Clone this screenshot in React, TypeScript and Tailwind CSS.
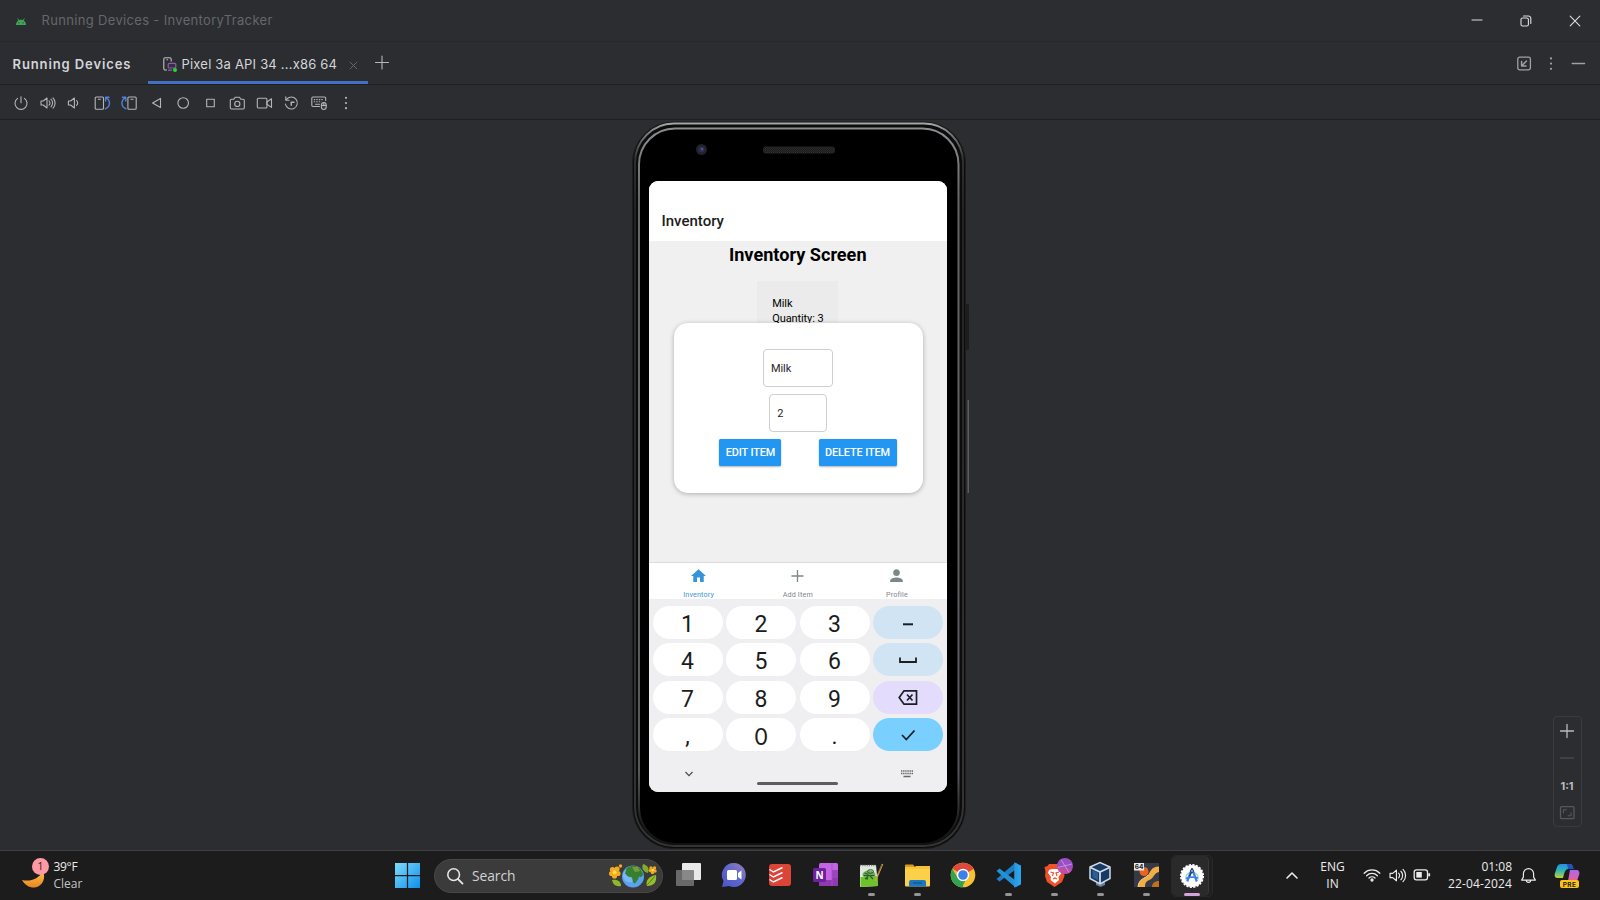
import React from "react";

const line = {
  fill: "none",
  stroke: "currentColor",
  strokeWidth: 1.1,
  strokeLinecap: "round" as const,
  strokeLinejoin: "round" as const,
};

function Icon({ children, size = 16, className = "" }: { children: React.ReactNode; size?: number; className?: string }) {
  return (
    <svg width={size} height={size} viewBox="0 0 16 16" className={"shrink-0 overflow-visible " + className} {...line}>
      {children}
    </svg>
  );
}

function TitleBar() {
  return (
    <header className="flex h-[42px] shrink-0 items-center border-b border-[#25272a]">
      <svg width="10" height="7" viewBox="0 0 10 7" className="ml-4 mt-px">
        <path d="M0 7 C0 4.8 1 3.3 2.3 2.4 L1.2 0.6 L1.8 0.2 L3 2 C4.3 1.5 5.7 1.5 7 2 L8.2 0.2 L8.8 0.6 L7.7 2.4 C9 3.3 10 4.8 10 7 Z" fill="#3aa757" />
        <circle cx="2.9" cy="4.8" r=".6" fill="#2b2d30" />
        <circle cx="7.1" cy="4.8" r=".6" fill="#2b2d30" />
      </svg>
      <span className="ml-[15.5px] whitespace-nowrap font-['Inter'] text-[13px] tracking-[0.33px] text-[#65676b]">
        Running Devices - InventoryTracker
      </span>
      <div className="ml-auto mr-px flex items-center text-[#dedede]">
        <span className="flex w-[48.5px] justify-center">
          <Icon><path d="M3 7h10" /></Icon>
        </span>
        <span className="flex w-[49px] justify-center">
          <Icon>
            <rect x="3" y="5" width="7.4" height="8" rx="1.5" />
            <path d="M5.5 3h4.8a2.5 2.5 0 0 1 2.5 2.5V10.5" />
          </Icon>
        </span>
        <span className="flex w-[49px] justify-center">
          <Icon><path d="M3.2 3.2l9.6 9.6M12.8 3.2l-9.6 9.6" /></Icon>
        </span>
      </div>
    </header>
  );
}

function TabBar() {
  return (
    <nav className="flex h-[43px] shrink-0 items-stretch border-b border-[#1e1f22] font-['Inter'] text-[13px] text-[#d3d5d9]">
      <span className="flex w-[148px] items-center whitespace-nowrap pl-[12.5px] pt-[3px] font-semibold tracking-[0.9px]">Running Devices</span>
      <div className="flex w-[220px] items-center border-b-[3px] border-[#4270c7] pl-[15px] pt-[6px]">
        <svg width="14" height="15" viewBox="0 0 14 15" fill="none" className="shrink-0">
          <path d="M4 13H2.2A1.4 1.4 0 0 1 .8 11.6V2.2A1.4 1.4 0 0 1 2.2.8H6.8A1.4 1.4 0 0 1 8.2 2.2V4.5M3.5 2.8h1.6" stroke="#bfc1c5" strokeWidth="1.1" />
          <rect x="5.2" y="6.4" width="7.6" height="4.6" rx="1" stroke="#8b5fa8" strokeWidth="1.2" fill="#3a2c45" />
          <path d="M5 13.2h4" stroke="#8b5fa8" strokeWidth="1.3" />
          <circle cx="12" cy="13" r="2" fill="#22dd2c" />
        </svg>
        <span className="ml-[4.5px] whitespace-nowrap tracking-[0.2px]">Pixel 3a API 34 ...x86 64</span>
        <Icon size={11} className="ml-[11px] mt-px text-[#76787c]"><path d="M3 3l10 10M13 3L3 13" /></Icon>
      </div>
      <div className="flex w-[28px] items-center justify-center text-[#b4b6b9]">
        <Icon><path d="M8 1v13M1.5 7.5h13" /></Icon>
      </div>
      <div className="ml-auto flex items-center text-[#9fa1a5]">
        <Icon className="mr-[12px]">
          <rect x="1.8" y="2.2" width="12.6" height="12.6" rx="1.8" strokeWidth="1.3" />
          <path d="M10.5 6L5.8 10.7M5.6 6.6v4.4h4.4" strokeWidth="1.5" />
        </Icon>
        <Icon className="mr-[11px]">
          <g fill="currentColor" stroke="none"><circle cx="7" cy="3.4" r="1.1" /><circle cx="7" cy="8.6" r="1.1" /><circle cx="7" cy="13.8" r="1.1" /></g>
        </Icon>
        <Icon className="mr-[13px]"><path d="M1.2 8.5h12.4" strokeWidth="1.3" /></Icon>
      </div>
    </nav>
  );
}

const tools: React.ReactNode[] = [
  <><path d="M8 1.8v6" /><path d="M4.6 3.4a6 6 0 1 0 6.8 0" /></>,
  <><path d="M1 6h2.2L7 3v10L3.2 10H1z" /><path d="M9 5.8a3 3 0 0 1 0 4.4M11 4.2a5.4 5.4 0 0 1 0 7.6M13 2.8a7.5 7.5 0 0 1 0 10.4" /></>,
  <><path d="M1.4 6h2.2L7.4 3v10L3.6 10H1.4z" /><path d="M9.6 5.6a3.2 3.2 0 0 1 0 4.8" /></>,
  <><rect x="1.2" y="2" width="8.3" height="12.2" rx="1" /><path d="M4.3 4.2h2.1" /><path d="M11.3 13.8C17 11.5 16.5 5 12 2.8M11.6 6V2.3H15" stroke="#4f82d8" strokeWidth="1.4" /></>,
  <><rect x="6.9" y="2" width="8.3" height="12.2" rx="1" /><path d="M10 4.2h2.1" /><path d="M5 13.8C-.6 11.5-.1 5 4.4 2.8M4.8 6V2.3H1.4" stroke="#4f82d8" strokeWidth="1.4" /></>,
  <path d="M12.5 3.4v9.2L4.6 8z" />,
  <circle cx="8.2" cy="8" r="5.3" />,
  <rect x="4.7" y="4.2" width="7.6" height="7.6" />,
  <><path d="M1.3 5.500a1.200 1.200 0 0 1 1.200-1.200h2.300l1.300-2h4.400l1.300 2h2.300a1.200 1.200 0 0 1 1.200 1.200v7.300a1.200 1.200 0 0 1-1.200 1.200H2.500a1.200 1.200 0 0 1-1.200-1.200z" /><circle cx="8.300" cy="8.900" r="2.600" /></>,
  <><rect x="1.300" y="3.200" width="9.600" height="9.800" rx="1" /><path d="M10.900 7l4.600-3.200v8.600L10.900 9.200z" /></>,
  <><path d="M3.400 4.500a6 6 0 1 1-1 4.500M2.800 1.800V5.200H6.200" /><path d="M8.200 10.300V7.300h2.800" strokeWidth="1.400" /></>,
  <><path d="M8.500 11.500H2A1.200 1.200 0 0 1 .8 10.300V3.200A1.200 1.200 0 0 1 2 2h11.500a1.200 1.200 0 0 1 1.200 1.200V5.500" /><path d="M3.200 4.600h.6M5.700 4.600h.6M8.200 4.600h.6M10.700 4.600h.6M3.200 6.800h.6M5.700 6.800h.6M8.200 6.800h.6M4.500 9.200h4" /><rect x="10.400" y="7.500" width="4.800" height="7" rx="2.400" fill="#3a3c40" /><path d="M12.800 7.500v3M10.400 10.500h4.800" /></>,
  <g fill="currentColor" stroke="none"><circle cx="8" cy="2.800" r="1.100" /><circle cx="8" cy="8" r="1.100" /><circle cx="8" cy="13.200" r="1.100" /></g>,
];

function ToolBar() {
  return (
    <div className="flex h-[35px] shrink-0 items-center border-b border-[#1e1f22] pl-[7px] pt-px text-[#b3b5b9]">
      {tools.map((t, i) => (
        <span key={i} className="flex w-[27.1px] shrink-0 justify-center">
          <Icon>{t}</Icon>
        </span>
      ))}
    </div>
  );
}

function DeviceSkin() {
  return (
    <svg width="342" height="730" viewBox="0 0 342 730" fill="none" className="absolute left-0 top-0">
      <defs>
        <linearGradient id="rim" x1="0" y1="0" x2="0" y2="1">
          <stop offset="0" stopColor="#a4a5a6" />
          <stop offset=".015" stopColor="#77787a" />
          <stop offset=".05" stopColor="#2f2f30" />
          <stop offset=".12" stopColor="#232324" />
          <stop offset="1" stopColor="#343435" />
        </linearGradient>
        <linearGradient id="gloss" x1="0" y1="0" x2="0" y2="1">
          <stop offset="0" stopColor="#8c8f92" />
          <stop offset=".1" stopColor="#65676a" />
          <stop offset=".9" stopColor="#56585b" />
          <stop offset=".97" stopColor="#1d1d1e" />
          <stop offset="1" stopColor="#111" />
        </linearGradient>
        <pattern id="mesh" width="2" height="2" patternUnits="userSpaceOnUse">
          <rect width="2" height="2" fill="#1b1b1b" />
          <rect width="1" height="1" fill="#303030" />
          <rect x="1" y="1" width="1" height="1" fill="#292929" />
        </pattern>
      </defs>
      <rect x="337" y="184" width="3" height="46" rx="1" fill="#1d1d1e" />
      <rect x="338.500" y="280" width="1.500" height="93" fill="#5c5d5e" />
      <rect x="3.500" y="2" width="333" height="726.500" rx="41" fill="#0c0c0d" stroke="#1d1d1e" />
      <rect x="6" y="3.500" width="328" height="722.500" rx="39" stroke="url(#rim)" strokeWidth="2" />
      <rect x="10" y="8.500" width="319.500" height="715.500" rx="36" fill="#000" stroke="url(#gloss)" strokeWidth="2" />
      <circle cx="72.500" cy="29.500" r="5.500" fill="#20222c" />
      <circle cx="72.500" cy="29.500" r="3" fill="#2c3050" />
      <circle cx="73" cy="29" r="1.200" fill="#4c5288" />
      <rect x="134" y="26.500" width="72" height="7" rx="3" fill="url(#mesh)" />
    </svg>
  );
}

function TabItem({ label, color, children }: { label: string; color: string; children: React.ReactNode }) {
  return (
    <div className={"flex flex-1 flex-col items-center " + color}>
      <svg width="19" height="18" viewBox="0 0 24 24" fill="currentColor" className="mt-[3.5px] shrink-0">{children}</svg>
      <span className="mt-[5.5px] text-[7.2px] leading-[10px] tracking-[0.15px]">{label}</span>
    </div>
  );
}

const keyBase = "flex h-[33px] w-[70px] items-center justify-center rounded-[16.5px] ";

function Keyboard() {
  const rows = [
    ["1", "2", "3"],
    ["4", "5", "6"],
    ["7", "8", "9"],
    [",", "0", "."],
  ];
  const tone = ["bg-[#d1e4f4]", "bg-[#d1e4f4]", "bg-[#e4dcfd]", "bg-[#79d0ff]"];
  const glyphs = [
    <path d="M7 14.300h10" strokeWidth="2" />,
    <path d="M4 9.500v4.500h16V9.500" strokeWidth="1.800" />,
    <><path d="M8 5.800h12.500v13.400H8L3.200 12.500z" strokeWidth="1.700" /><path d="M11 9.500l5.500 6M16.500 9.500L11 15.500" strokeWidth="1.700" /></>,
    <path d="M6 12l4.300 4.500L18.500 7.500" strokeWidth="1.800" />,
  ];
  return (
    <div className="flex h-[193px] flex-col bg-[#efeff1] px-[3.5px] pt-[6.5px]">
      <div className="flex flex-col gap-[4.6px]">
        {rows.map((r, i) => (
          <div key={i} className="flex justify-between">
            {r.map((k) => (
              <div key={k} className={keyBase + "bg-white pt-[4px] leading-none text-[#1b1c1e] " + (k === "0" ? "font-['Inter'] text-[22.5px]" : "font-['Roboto'] text-[23px]")}>
                {k}
              </div>
            ))}
            <div className={keyBase + tone[i]}>
              <svg width="24" height="24" viewBox="0 0 24 24" fill="none" stroke="#1c1f24">{glyphs[i]}</svg>
            </div>
          </div>
        ))}
      </div>
      <div className="flex items-start justify-between pt-[14px]">
        <span className="flex w-[73px] justify-center pt-[4px]">
          <svg width="10" height="10" viewBox="0 0 10 10" fill="none" stroke="#4a4b4e" strokeWidth="1.2"><path d="M1.500 3L5 6.600 8.500 3" /></svg>
        </span>
        <span className="mt-[16.5px] h-[3px] w-[81px] rounded-full bg-[#5d5d60]" />
        <span className="flex w-[73px] justify-center pt-[5px]">
          <svg width="12" height="8" viewBox="0 0 12 8" stroke="#66676a" fill="none">
            <path d="M0 1h12M0 3.500h12" strokeWidth="1.400" strokeDasharray="1.400 .72" />
            <path d="M2.500 6.500h7" strokeWidth="1.300" />
          </svg>
        </span>
      </div>
    </div>
  );
}

function Screen() {
  return (
    <div className="relative flex h-[611px] w-[297.5px] flex-col overflow-hidden rounded-[9px] bg-[#f0f0f0] font-['Roboto'] text-black">
      <div className="flex h-[61px] shrink-0 items-end border-b border-[#f0f0f0] bg-white pb-[11px] pl-[12.5px]">
        <span className="text-[15px] font-medium leading-[17px] text-[#1c1c1e]">Inventory</span>
      </div>
      <div className="flex flex-1 flex-col items-center">
        <h1 className="mt-[2px] whitespace-nowrap text-[18.1px] font-bold leading-[22px]">Inventory Screen</h1>
        <div className="mt-[15px] h-[60px] w-[81px] bg-[#ebebeb] pl-[15px] pt-[16px] text-[11px] leading-[14.7px] tracking-[-0.1px]">
          <p>Milk</p>
          <p className="whitespace-nowrap">Quantity: 3</p>
        </div>
      </div>
      <div className="flex h-[37px] shrink-0 overflow-hidden border-t border-[#dcdcdc] bg-white">
        <TabItem label="Inventory" color="text-[#3694d8]"><path d="M10 20v-6h4v6h5v-8h3L12 3 2 12h3v8z" /></TabItem>
        <TabItem label="Add Item" color="text-[#7c878a]"><path d="M20 12.900h-7.100V20h-1.800v-7.100H4v-1.800h7.100V4h1.800v7.100H20z" /></TabItem>
        <TabItem label="Profile" color="text-[#7c878a]"><path d="M12 12c2.500 0 4.500-2 4.500-4.500S14.500 3 12 3 7.500 5 7.500 7.500 9.500 12 12 12zm0 2c-3 0-8.500 1.500-8.500 4.500V20h17v-1.500c0-3-5.500-4.500-8.500-4.500z" /></TabItem>
      </div>
      <Keyboard />
      <div className="absolute left-[24.5px] top-[141.5px] flex h-[170px] w-[249px] flex-col items-center rounded-[14px] bg-white pt-[26px] text-[11px] text-[#242424] shadow-[0_1px_5px_rgba(0,0,0,0.28)]">
        <div className="flex h-[38px] w-[70px] items-center rounded-[4px] border border-[#cfcfcf] pl-[7px] pt-[3px] tracking-[-0.1px]">Milk</div>
        <div className="mt-[7px] flex h-[38px] w-[57.5px] items-center rounded-[4px] border border-[#cfcfcf] pl-[7px] pt-[3px]">2</div>
        <div className="mt-[7.5px] flex w-full justify-between pl-[45.5px] pr-[26px] text-[10.9px] font-medium leading-[28px] tracking-[-0.1px] text-white">
          <span className="h-[27px] w-[62px] whitespace-nowrap rounded-[1.5px] bg-[#2196f3] pl-px text-center shadow-[0_1px_2px_rgba(0,0,0,0.3)]">EDIT ITEM</span>
          <span className="h-[27px] w-[78px] whitespace-nowrap rounded-[1.5px] bg-[#2196f3] text-center shadow-[0_1px_2px_rgba(0,0,0,0.3)]">DELETE ITEM</span>
        </div>
      </div>
    </div>
  );
}

function ZoomPanel() {
  return (
    <div className="absolute left-[1553px] top-[596px] flex h-[111px] w-[29px] flex-col items-center rounded-[4px] border border-[#393b3f] pr-px pt-[6px] text-[#b9bbbe]">
      <Icon><path d="M8 1.500v13M1.500 8h13" strokeWidth="1.300" /></Icon>
      <Icon className="mt-[10.5px] text-[#55575b]"><path d="M1.500 8h13" strokeWidth="1.200" /></Icon>
      <span className="mt-[12px] font-['Inter'] text-[11px] font-bold leading-4">1:1</span>
      <Icon className="mt-[11px] text-[#56585c]">
        <rect x="1.500" y="1.700" width="13.500" height="12" rx="1" strokeWidth="1.300" />
        <path d="M4.500 7.700V4.700h3M12 7.700v3H9" />
      </Icon>
    </div>
  );
}

function Globe() {
  return (
    <svg width="48" height="26" viewBox="0 0 48 26" className="shrink-0">
      <path d="M3 17c5-1 9 1 9 6-5 1-8-1-9-6z" fill="#8db82a" />
      <path d="M34 1c4 1 7 4 5 9-4-1-7-4-5-9z" fill="#7fae2c" />
      <path d="M47 12c1 7-2 11-9 11-2-5 2-10 9-11z" fill="#94bf2d" />
      <path d="M46 13c-2 3-5 6-8 9" stroke="#5d8a1c" strokeWidth=".7" />
      <circle cx="24" cy="13.500" r="11" fill="#5aa1ee" />
      <circle cx="21" cy="12.500" r="7" fill="#79b8f8" />
      <path d="M17.500 5.500c3-3.500 10-4 13.500 0l3 5c0 3-2 4-4 3l-1 3-3 4-2-1-1-5-4-1-3-3z" fill="#357f2f" />
      <path d="M23 4l6 0 2 4-5 1z" fill="#7a9c35" />
      <g fill="#f6ab1e">
        <circle cx="3.500" cy="6.500" r="2.600" /><circle cx="8" cy="6" r="2.600" /><circle cx="9" cy="10.500" r="2.600" /><circle cx="5.500" cy="13" r="2.600" /><circle cx="2.600" cy="10.500" r="2.600" />
        <circle cx="11.500" cy="3" r="1.700" />
        <circle cx="42" cy="5" r="1.700" /><circle cx="45.500" cy="5" r="1.700" /><circle cx="46" cy="8" r="1.700" /><circle cx="43.500" cy="9.500" r="1.700" /><circle cx="41.500" cy="7.500" r="1.700" />
      </g>
      <circle cx="5.700" cy="9.300" r="2" fill="#ffd95b" />
      <circle cx="43.800" cy="7" r="1.200" fill="#ffe07a" />
    </svg>
  );
}

const apps: { art: React.ReactNode; running?: boolean }[] = [
  { art: <><rect x="8" y="1" width="19" height="17" rx="1" fill="#e9e9e9" /><rect x="2" y="8" width="18" height="16" rx="1" fill="#777" fillOpacity=".85" /></> },
  {
    art: <>
      <defs><linearGradient id="chat" x1="0" y1="1" x2="1" y2="0"><stop offset="0" stopColor="#4d55c8" /><stop offset=".5" stopColor="#5f66cf" /><stop offset="1" stopColor="#9a7fb8" /></linearGradient></defs>
      <path d="M14 1a12 12 0 1 1-5 23L2 25l1.500-6A12 12 0 0 1 14 1z" fill="url(#chat)" />
      <rect x="7" y="8" width="10" height="10" rx="1.500" fill="#fff" /><path d="M18 11l3.500-2.500v9L18 15z" fill="#fff" />
    </>,
  },
  { art: <><rect x="3" y="2" width="22" height="22" rx="3" fill="#dc4437" /><path d="M3.500 7.500l4 2.500 9-4.500M3.500 12.500l4 2.500 9-4.500M3.500 17.500l4 2.500 9-4.500" fill="none" stroke="#fff" strokeWidth="1.400" /></> },
  { art: <><rect x="7" y="1" width="19" height="23" rx="1.500" fill="#c264e3" /><path d="M20 8h6v8h-6z" fill="#9c44c2" /><path d="M20 16h6v6.500a1.500 1.500 0 0 1-1.500 1.500H7v-6h13z" fill="#8f3ab0" /><path d="M20 1v23" stroke="#a74fcb" strokeWidth=".8" /><rect x="1" y="6" width="13" height="14" rx="1.500" fill="#6f209c" /><text x="7.500" y="16.700" textAnchor="middle" fontFamily="Open Sans" fontWeight="700" fontSize="10" fill="#fff">N</text></> },
  {
    running: true,
    art: <>
      <path d="M2 3h16l2 21-18 1z" fill="#dfe8df" />
      <path d="M2.500 15l17-1 .5 10-17.500 1z" fill="#6fc22a" />
      <path d="M2 3.500h16" stroke="#888" strokeWidth="1.600" strokeDasharray="1.200 1" />
      <ellipse cx="11" cy="12.500" rx="6.500" ry="4" fill="#6fb15a" />
      <ellipse cx="12.500" cy="9.500" rx="3" ry="1.800" fill="none" stroke="#2e4f2a" strokeWidth="1" />
      <path d="M5.500 13.500h11M6.500 11l4 1.500M7 17l3-2.500M12 14l3 3M10 13l-1 5" stroke="#2a5a25" strokeWidth="1.100" fill="none" />
      <path d="M24.500 2L19 15l-1.500 4" stroke="#caa44a" strokeWidth="1.700" fill="none" /><path d="M24 2.500L19.500 12" stroke="#554327" strokeWidth=".7" />
    </>,
  },
  { running: true, art: <><path d="M2 3.500a1 1 0 0 1 1-1h7l2.500 3H2z" fill="#d99a1d" /><rect x="2" y="5" width="25" height="19.500" rx="1" fill="#fcd049" /><path d="M2 5.500h9l2-1.500h14v3H2z" fill="#f5c337" /><path d="M6 24.500v-4.500a2 2 0 0 1 2-2h13a2 2 0 0 1 2 2v4.500z" fill="#1b77c4" /><path d="M10 21h9" stroke="#0d5692" strokeWidth="1.300" /></> },
  {
    art: <>
      <circle cx="14" cy="13" r="12.300" fill="#f7c22f" />
      <path d="M14 13L3.350 6.850A12.300 12.300 0 0 1 24.650 6.850z" fill="#dd4a3c" /><path d="M14 6.850h10.650L14 13z" fill="#dd4a3c" />
      <path d="M3.350 6.850L8.700 16.100 14 19.100 14 25.300A12.300 12.300 0 0 1 3.350 6.850z" fill="#32a350" />
      <path d="M14 25.300l5.300-9.200L14 13l-3 5 3.500 1z" fill="#f7c22f" /><path d="M8.700 16l5.300 3.100 2.500-.5L13 25.250A12.300 12.300 0 0 1 6 22z" fill="#32a350" />
      <circle cx="14" cy="13" r="6.200" fill="#fff" /><circle cx="14" cy="13" r="4.800" fill="#3f7fe8" />
    </>,
  },
  { running: true, art: <><path d="M19.500.500L26 3.500v19L19.500 25.500z" fill="#2aa4ee" /><path d="M20 1v7L4.500 19.500 1.500 17z" fill="#1c80c4" /><path d="M20 25v-7L4.500 6.500 1.500 9z" fill="#2292d8" /><path d="M19.500.500l3 1.500v22l-3 1.500z" fill="#2c9be4" /></> },
  {
    running: true,
    art: <>
      <path d="M8 2h11l2 2 3 1-1 5 .5 4-2.500 6-7.500 5-7.500-5L4 14l.500-4-1-5 3-1z" fill="#f0502a" />
      <path d="M8 8l3-1h5l3.500 1 1 3-3 4 .500 3-4 3.500L9.500 18l.500-3-3-4z" fill="#fff" /><path d="M9.500 10l3 1-1 3M18 10l-3 1 1 3M12 17l2-1 2 1" stroke="#f0502a" strokeWidth="1.200" fill="none" />
      <circle cx="24" cy="4" r="8" fill="#9a50c4" /><path d="M16.300 6C21 5 28 6 31 8A8 8 0 0 1 18 9z" fill="#c04f9f" /><path d="M16.500 5.500L31 2M20-2.500l8 13" stroke="#cfa0e4" strokeWidth=".8" />
    </>,
  },
  { running: true, art: <><path d="M9 19h9v4l-4.500 2L9 23z" fill="#66809c" /><path d="M3 5l10-4.500L23 5v11.500L13 22 3 16.500z" fill="#173a63" stroke="#cfdbe7" strokeWidth="1.500" /><path d="M3.500 5.500L13 10l9.500-4.500M13 10v11.500" stroke="#cfdbe7" strokeWidth="1.800" fill="none" /><path d="M5.500 8l5.500 2.800v7.500l-5.500-3z" fill="#2c5f96" /></> },
  { running: true, art: <><rect x="2" y="1" width="25" height="24" fill="#343a46" /><path d="M6 25c1-9 7-8 10-12s3-8 11-8.500V10c-5 1-5 5-8 7s-6 2-6 8z" fill="#f4ad45" /><path d="M6 25c1-9 7-8 10-12" fill="none" stroke="#ffd58a" strokeWidth="1" /><circle cx="12" cy="9.500" r="4.500" fill="#e8641f" /><path d="M20 25c0-4 3-6 7-6v6z" fill="#c0711f" /><rect x="2" y="1" width="10" height="7.500" fill="#e9e9e9" /><text x="7" y="7.200" textAnchor="middle" fontFamily="Inter" fontWeight="700" fontSize="6.500" fill="#222">64</text></> },
];

function TaskBar() {
  return (
    <footer className="flex h-[50px] shrink-0 items-center border-t border-[#3e4043] bg-[#1c1c1c] font-['Open_Sans'] text-[12px] text-[#ececec]">
      <div className="flex w-[395px] shrink-0 items-center pl-[21px]">
        <div className="relative -mt-[4px] flex h-[32px] w-[28px]">
          <svg width="28" height="32" viewBox="0 0 28 32">
            <defs><linearGradient id="moon" x1="0" y1="0" x2="0" y2="1"><stop offset="0" stopColor="#ffc14d" /><stop offset="1" stopColor="#ea8520" /></linearGradient></defs>
            <path d="M22 13c3 7 0 15-8 16.500C8.500 30 4 27 1 22c8 2 17-1 21-9z" fill="url(#moon)" />
          </svg>
          <span className="absolute left-[11px] top-0 flex h-[17px] w-[17px] items-center justify-center rounded-full bg-[#ff99a4] text-[11px] text-[#3a2426]">1</span>
        </div>
        <div className="-mt-[2px] ml-[4.5px] leading-[17px]">
          <p className="tracking-[-0.3px]">39°F</p>
          <p className="text-[#c4c4c4]">Clear</p>
        </div>
      </div>
      <svg width="25" height="25" viewBox="0 0 24 24" className="shrink-0">
        <defs><linearGradient id="win" x1="0" y1="0" x2="1" y2="1"><stop offset="0" stopColor="#7fdcfb" /><stop offset="1" stopColor="#0c8fec" /></linearGradient></defs>
        <path d="M0 0h11.400v11.400H0zM12.600 0H24v11.400H12.600zM0 12.600h11.400V24H0zM12.600 12.600H24V24H12.600z" fill="url(#win)" />
      </svg>
      <div className="ml-[14px] flex h-[34px] w-[229px] shrink-0 items-center rounded-full border border-[#484848] bg-[#3b3b3b] pl-[11px] pr-[5px]">
        <Icon size={18} className="text-[#e8e8e8]"><circle cx="6.800" cy="6.800" r="5.200" strokeWidth="1.400" /><path d="M10.700 10.700l4 4" strokeWidth="1.600" /></Icon>
        <span className="ml-[8px] mr-auto pt-px text-[13.8px] tracking-[-0.05px] text-[#d2d2d2]">Search</span>
        <Globe />
      </div>
      <div className="ml-[2.5px] flex shrink-0">
        {apps.map((a, i) => (
          <div key={i} className="flex h-[46px] w-[45.8px] flex-col items-center pt-[9px]">
            <svg width="28" height="26" viewBox="0 0 28 26" className="shrink-0 overflow-visible">{a.art}</svg>
            {a.running && <span className="mt-[5.5px] h-[3px] w-[7px] rounded-full bg-[#959595]" />}
          </div>
        ))}
        <div className="flex w-[45.8px] pl-[2px]">
          <div className="mt-[2px] flex h-[42px] w-[42px] rounded-[5px] border border-[#282828] bg-[#202020]">
            <div className="flex w-[37px] flex-col items-center rounded-[5px] border-r border-[#383838] bg-[#2a2a2a] pl-[3px] pt-[7px]">
              <svg width="26" height="26" viewBox="0 0 26 26" className="shrink-0">
                <circle cx="13" cy="13" r="11" fill="#fff" /><circle cx="13" cy="13" r="11.300" fill="none" stroke="#fff" strokeWidth="1.500" strokeDasharray="2.200 1.350" />
                <path d="M7 16.500C6 12 9 9.500 13 9.500s7 2.500 6 7" fill="none" stroke="#4bb37a" strokeWidth="1.500" opacity=".5" />
                <path d="M12.300 7.500L8.200 18.500M13.700 7.500L17.800 18.500" stroke="#3f7fe8" strokeWidth="2.200" /><path d="M7 15.500c4-1.800 7-1.800 12-.5" stroke="#3f7fe8" strokeWidth="1.800" fill="none" /><path d="M13 5v2.500l-2.500 6" stroke="#24446e" strokeWidth="1.600" fill="none" /><circle cx="13" cy="8" r="2" fill="#24446e" /><circle cx="13" cy="8" r=".8" fill="#fff" />
              </svg>
              <span className="mt-[4px] h-[3px] w-[16px] shrink-0 rounded-full bg-[#d7a3df]" />
            </div>
          </div>
        </div>
      </div>
      <div className="ml-auto flex items-center">
        <Icon className="mr-[17.5px]"><path d="M3 10L8 5l5 5" strokeWidth="1.600" /></Icon>
        <div className="-mt-px w-[30px] text-center leading-[17px]"><p>ENG</p><p>IN</p></div>
        <svg width="18" height="16" viewBox="0 0 18 16" fill="none" stroke="#ececec" strokeWidth="1.300" strokeLinecap="round" className="-mt-[2px] ml-[15px]">
          <path d="M1.200 6.200a11 11 0 0 1 15.600 0M3.600 8.700a7.600 7.600 0 0 1 10.800 0M6 11a4.300 4.300 0 0 1 6 0" /><circle cx="9" cy="13" r="1" fill="#ececec" />
        </svg>
        <Icon size={17} className="-mt-px ml-[8px]"><path d="M1 6h2.500L7 3v10L3.500 10H1z" /><path d="M9 5.800a3 3 0 0 1 0 4.400M11.200 4a5.800 5.800 0 0 1 0 8M13.200 2.300a8 8 0 0 1 0 11.400" /></Icon>
        <svg width="18" height="14" viewBox="0 0 18 14" fill="none" stroke="#ececec" strokeWidth="1.300" className="-mt-px ml-[7.5px]">
          <rect x="1.200" y="1.800" width="13.300" height="10" rx="2.200" /><rect x="3.300" y="4" width="5.500" height="5.600" fill="#ececec" stroke="none" /><path d="M16.200 5.300v3" strokeWidth="1.800" />
        </svg>
        <div className="-mt-[2px] ml-[12px] w-[69px] whitespace-nowrap text-right leading-[17px]"><p>01:08</p><p className="tracking-[0.15px]">22-04-2024</p></div>
        <Icon size={17} className="ml-[7.5px]"><path d="M1.500 12.300h13l-1.700-2.800V6.300a4.800 4.800 0 0 0-9.600 0v3.200zM6 12.500a2 2 0 0 0 4 0" /></Icon>
        <svg width="26" height="26" viewBox="0 0 26 26" className="ml-[17px] mr-[20.5px]">
          <defs>
            <linearGradient id="cpa" x1="0" y1="0" x2="0" y2="1"><stop offset="0" stopColor="#2390e8" /><stop offset=".5" stopColor="#35b7b0" /><stop offset="1" stopColor="#c8cf2e" /></linearGradient>
            <linearGradient id="cpb" x1="0" y1="0" x2="0" y2="1"><stop offset="0" stopColor="#a86af0" /><stop offset="1" stopColor="#ee5f8f" /></linearGradient>
          </defs>
          <path d="M7 1h9c2 0 3 2 3.500 5H14c-2 0-3 2-4 5l-1 4H4c-3 0-4-2-3-5l2-6c.800-2 2-3 4-3z" fill="url(#cpa)" />
          <path d="M13 1h3c2 0 3 2 3.500 5H14z" fill="#2350c4" />
          <path d="M16 7h6c3 0 4 2 3 5l-2 6h-9z" fill="url(#cpb)" />
          <rect x="6" y="17" width="19" height="8" rx="2" fill="#fcc21b" />
          <text x="15.500" y="23.500" textAnchor="middle" fontFamily="Inter" fontWeight="700" fontSize="6.500" letterSpacing=".4" fill="#2b2410">PRE</text>
        </svg>
      </div>
    </footer>
  );
}

export default function App() {
  return (
    <div className="flex h-[900px] w-[1600px] flex-col overflow-hidden bg-[#2b2d30]">
      <TitleBar />
      <TabBar />
      <ToolBar />
      <main className="relative flex min-h-0 flex-1">
        <div className="relative ml-[629px] h-[730px] w-[342px] pl-[20px] pt-[61px]">
          <DeviceSkin />
          <Screen />
        </div>
        <ZoomPanel />
      </main>
      <TaskBar />
    </div>
  );
}
